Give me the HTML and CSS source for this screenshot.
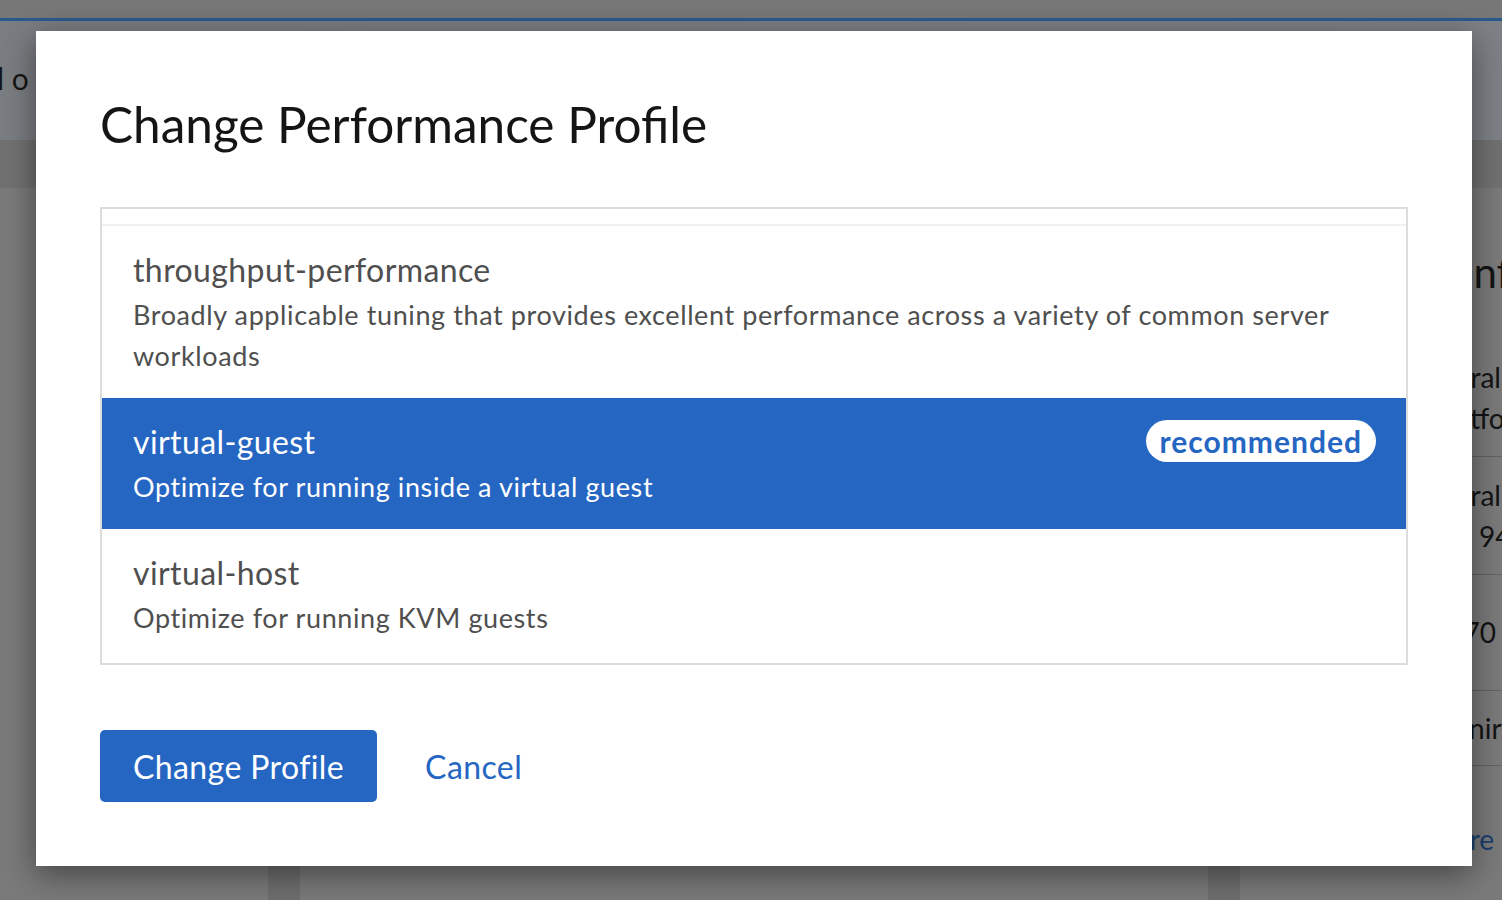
FILE: index.html
```html
<!DOCTYPE html>
<html lang="en">
<head>
<meta charset="utf-8">
<title>Change Performance Profile</title>
<link rel="stylesheet" href="styles.css">
</head>
<body>
<div class="page">
  <div class="topbar"></div>
  <header class="header"><span class="header-text">l o</span></header>
  <div class="band"></div>
  <main class="content">
    <section class="card card-left"></section>
    <section class="card card-mid"></section>
    <section class="card card-right">
      <h2 class="card-title">Configuration</h2>
      <div class="row row-two">
        <div class="val v-general">General</div>
        <div class="val v-platform">Platform</div>
      </div>
      <div class="row row-two">
        <div class="val v-general">General</div>
        <div class="val v-rev">Rev 94</div>
      </div>
      <div class="row row-tall">
        <div class="val v-year">1970</div>
      </div>
      <div class="row row-one">
        <div class="val v-admin">Adminir</div>
      </div>
      <div class="row-link">
        <span class="link v-more">Show more</span>
      </div>
    </section>
  </main>
</div>

<div class="backdrop">
  <div class="modal" role="dialog" aria-labelledby="modal-title">
    <h1 class="modal-title" id="modal-title">Change Performance Profile</h1>
    <div class="profile-list">
      <div class="list-peek"></div>
      <div class="item">
        <div class="item-text">
          <div class="item-title">throughput-performance</div>
          <div class="item-desc">Broadly applicable tuning that provides excellent performance across a variety of common server workloads</div>
        </div>
      </div>
      <div class="item selected">
        <div class="item-text">
          <div class="item-title">virtual-guest</div>
          <div class="item-desc">Optimize for running inside a virtual guest</div>
        </div>
        <span class="badge">recommended</span>
      </div>
      <div class="item">
        <div class="item-text">
          <div class="item-title">virtual-host</div>
          <div class="item-desc">Optimize for running KVM guests</div>
        </div>
      </div>
    </div>
    <div class="footer">
      <button class="btn btn-primary">Change Profile</button>
      <button class="btn btn-link">Cancel</button>
    </div>
  </div>
</div>
</body>
</html>
```
FILE: styles.css
```css
html, body {
  margin: 0;
  padding: 0;
}
body {
  width: 1502px;
  height: 900px;
  overflow: hidden;
  font-family: Lato, "Open Sans", sans-serif;
  position: relative;
}

/* ---------- dimmed background page ---------- */
.page {
  height: 900px;
  display: flex;
  flex-direction: column;
  background: #6f6f6f;
}
.topbar {
  height: 18px;
  background: #777777;
  border-bottom: 3px solid #2a5a8c;
}
.header {
  height: 119px;
  box-sizing: border-box;
  padding-top: 39px;
  background: linear-gradient(90deg, #7a7d81, #7d8085);
  font-size: 30px;
  line-height: 36px;
  color: #151515;
}
.header-text {
  margin-left: -3px;
}
.band {
  height: 48px;
  background: #717171;
}
.content {
  flex: 1;
  display: flex;
  gap: 32px;
  background: #6e6e6e;
}
.card {
  background: #7a7a7a;
}
.card-left { width: 268px; }
.card-mid { width: 908px; }
.card-right {
  flex: 1;
  overflow: hidden;
  white-space: nowrap;
  color: #141414;
}
.card-title {
  margin: 0;
  padding-top: 59px;
  margin-left: 182px;
  font-size: 42px;
  line-height: 50px;
  font-weight: 400;
}
.row {
  margin-top: 0;
  border-bottom: 1px solid #626262;
  font-size: 28px;
  line-height: 41px;
}
.card-title + .row { margin-top: 42px; }
.row-two { padding: 18px 0 17px; }
.row-tall { padding: 37px 0 37px; }
.row-one { padding: 17px 0 16px; }
.v-general { margin-left: 165px; }
.v-platform { margin-left: 193px; }
.v-rev { margin-left: 187px; }
.v-year { margin-left: 191px; }
.v-admin { margin-left: 165px; }
.row-link {
  padding-top: 53px;
  font-size: 28px;
  line-height: 41px;
}
.link {
  color: #1c3f6e;
}
.v-more { margin-left: 116px; }

/* ---------- modal ---------- */
.backdrop {
  position: absolute;
  top: 0;
  left: 0;
  width: 1502px;
  height: 900px;
}
.modal {
  margin: 31px 0 0 36px;
  width: 1436px;
  height: 835px;
  box-sizing: border-box;
  padding: 63px 64px 64px;
  background: #ffffff;
  display: flex;
  flex-direction: column;
  box-shadow: 0 8px 30px rgba(0, 0, 0, 0.45);
}
.modal-title {
  margin: 0;
  font-size: 49.5px;
  line-height: 61px;
  font-weight: 400;
  color: #151515;
}
.profile-list {
  margin-top: 52px;
  height: 458px;
  box-sizing: border-box;
  border: 2px solid #dcdcdc;
  overflow: hidden;
}
.list-peek {
  height: 15px;
  border-bottom: 2px solid #f0f0f0;
}
.item {
  display: flex;
  align-items: flex-start;
  padding: 24px 30px 22px 31px;
  color: #4f4f4f;
}
.item-text {
  flex: 1;
}
.item-title {
  font-size: 32px;
  line-height: 40px;
  letter-spacing: 0.4px;
}
.item-desc {
  margin-top: 4px;
  font-size: 27px;
  line-height: 41px;
  letter-spacing: 0.6px;
}
.item.selected {
  background: #2566c3;
  color: #ffffff;
}
.badge {
  margin-top: -2px;
  background: #ffffff;
  color: #2566c3;
  font-size: 30px;
  line-height: 42px;
  font-weight: 700;
  letter-spacing: 1px;
  padding: 0 14px;
  border-radius: 21px;
}
.footer {
  margin-top: 65px;
  display: flex;
  gap: 15px;
}
.btn {
  font-family: inherit;
  font-size: 32px;
  letter-spacing: 0.4px;
  height: 72px;
  padding: 0 33px;
  border: 0;
  border-radius: 5px;
  cursor: pointer;
}
.btn-primary {
  background: #2566c3;
  color: #ffffff;
}
.btn-link {
  background: transparent;
  color: #2566c3;
}
```
